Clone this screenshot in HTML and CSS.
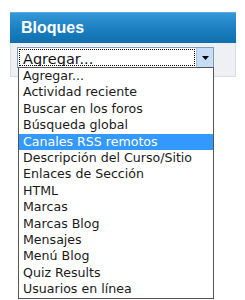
FILE: index.html
```html
<!DOCTYPE html>
<html>
<head>
<meta charset="utf-8">
<link rel="stylesheet" href="styles.css">
</head>
<body>
<div class="panel">
  <div class="panel-head">Bloques</div>
  <div class="panel-body">
    <div class="combo">
      <div class="combo-box">
        <div class="combo-value"><span class="focus">Agregar...</span></div>
        <div class="combo-btn">
          <svg width="7" height="4" viewBox="0 0 7 4"><path d="M0 0H7L3.5 4Z" fill="#000"/></svg>
        </div>
      </div>
      <ul class="combo-list">
        <li>Agregar...</li>
        <li>Actividad reciente</li>
        <li>Buscar en los foros</li>
        <li>Búsqueda global</li>
        <li class="sel">Canales RSS remotos</li>
        <li>Descripción del Curso/Sitio</li>
        <li>Enlaces de Sección</li>
        <li>HTML</li>
        <li>Marcas</li>
        <li>Marcas Blog</li>
        <li>Mensajes</li>
        <li>Menú Blog</li>
        <li>Quiz Results</li>
        <li>Usuarios en línea</li>
      </ul>
    </div>
  </div>
</div>
</body>
</html>
```
FILE: styles.css
```css
html, body {
  margin: 0;
  padding: 0;
  background: #fff;
  min-height: 300px;
}
.panel {
  margin: 12px 0 0 10px;
  width: 226px;
}
.panel-head {
  height: 31px;
  box-sizing: border-box;
  padding-left: 11px;
  background: linear-gradient(#3597d6, #1a7fc0 55%, #116fae);
  border-top: 1px solid #5aaee2;
  color: #fff;
  font: bold 16px/30px "Liberation Sans", Arial, sans-serif;
}
.panel-body {
  background: #eef0f3;
  border: 1px solid #d6dde4;
  border-top: none;
  height: 34px;
  padding: 4px 0 0 6px;
  box-sizing: border-box;
}
.combo {
  width: 197px;
}
.combo-box {
  display: flex;
  height: 21px;
  border: 1px solid #7f9db9;
  box-sizing: border-box;
  background: #fff;
}
.combo-value {
  flex: 1;
  padding: 1px;
  display: flex;
}
.focus {
  flex: 1;
  outline: 1px dotted #000;
  outline-offset: -1px;
  padding-left: 4px;
  font: 14.5px/20px "DejaVu Sans", Verdana, sans-serif;
  color: #111;
  overflow: hidden;
}
.combo-btn {
  width: 16px;
  background: #c6ddf5;
  border-left: 1px solid #a8c4e0;
  display: flex;
  align-items: center;
  justify-content: center;
}
.combo-list {
  position: relative;
  z-index: 2;
  margin: -1px 0 0 1px;
  width: 196px;
  box-sizing: border-box;
  padding: 0;
  list-style: none;
  background: #fff;
  border: 1px solid #555;
  font: 12.6px/16.4px "DejaVu Sans", Verdana, sans-serif;
  color: #1a1a1a;
}
.combo-list li {
  padding-left: 4px;
  white-space: nowrap;
}
.combo-list li.sel {
  background: #3399ff;
  color: #fff;
}
```
